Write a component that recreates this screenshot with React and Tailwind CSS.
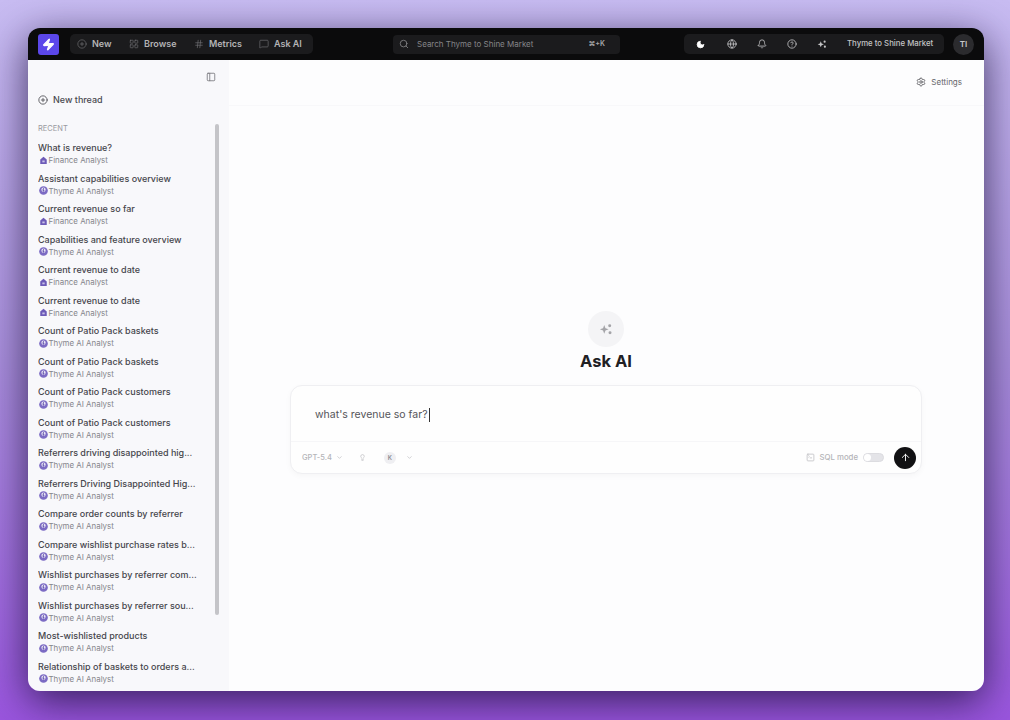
import { ArrowUp, Bell, ChevronDown, CircleHelp, CirclePlus, Globe, Hash, Lightbulb, Moon, PanelLeft, Search, Settings, LayoutGrid, MessageSquare, SquareTerminal, Zap } from 'lucide-react'

const threads = [
  ['What is revenue?', 'finance'],
  ['Assistant capabilities overview', 'thyme'],
  ['Current revenue so far', 'finance'],
  ['Capabilities and feature overview', 'thyme'],
  ['Current revenue to date', 'finance'],
  ['Current revenue to date', 'finance'],
  ['Count of Patio Pack baskets', 'thyme'],
  ['Count of Patio Pack baskets', 'thyme'],
  ['Count of Patio Pack customers', 'thyme'],
  ['Count of Patio Pack customers', 'thyme'],
  ['Referrers driving disappointed hig...', 'thyme'],
  ['Referrers Driving Disappointed Hig...', 'thyme'],
  ['Compare order counts by referrer', 'thyme'],
  ['Compare wishlist purchase rates b...', 'thyme'],
  ['Wishlist purchases by referrer com...', 'thyme'],
  ['Wishlist purchases by referrer sou...', 'thyme'],
  ['Most-wishlisted products', 'thyme'],
  ['Relationship of baskets to orders a...', 'thyme'],
]

const navItems = [
  { label: 'New', icon: CirclePlus, w: 'w-[52px]' },
  { label: 'Browse', icon: LayoutGrid, w: 'w-[65px]' },
  { label: 'Metrics', icon: Hash, w: 'w-[65px]' },
  { label: 'Ask AI', icon: MessageSquare, w: 'w-[50px]' },
]

// big four point star with two small dots, used on the AI button and the empty state
function Spark({ className }) {
  return (
    <svg viewBox="0 0 16 16" fill="currentColor" className={className}>
      <path d="M6 3.5 7.4 7 11 8.4 7.4 9.8 6 13.3 4.6 9.8 1 8.4 4.6 7z" />
      <circle cx="12.2" cy="4.2" r="1.7" />
      <circle cx="12.6" cy="12.2" r="1.7" />
    </svg>
  )
}

function AnalystIcon({ kind }) {
  if (kind === 'finance') {
    return (
      <svg viewBox="0 0 10 10" className="h-[9px] w-[9px] shrink-0">
        <path d="M5 .8 8.6 4v5H1.4V4z" fill="#6d5bb8" />
        <rect x="3.7" y="5" width="2.6" height="2" fill="#c9c2e8" />
      </svg>
    )
  }
  return (
    <svg viewBox="0 0 10 10" className="h-[9px] w-[9px] shrink-0">
      <circle cx="5" cy="5" r="4.8" fill="#7c6bc4" />
      <circle cx="5" cy="4.2" r="2.4" fill="#e8e5f5" />
      <path d="M4.6 2.4h1.2L5 4.4h1.2L4.4 7.6 4.8 5H3.7z" fill="#5b4aa8" />
    </svg>
  )
}

function TopBar() {
  return (
    <header className="flex h-[32px] shrink-0 items-center bg-[#0b0b0c] pl-[10px] pr-[10px]">
      <div className="flex h-[21px] w-[21px] items-center justify-center rounded-[3px] bg-[#5b47ea]">
        <Zap size={13} className="fill-white text-white" />
      </div>
      <nav className="ml-[11px] flex h-[20px] w-[243px] items-center rounded-[5px] bg-[#1b1b1d] pl-[7px] text-[9px] font-semibold text-[#b4b4b6]">
        {navItems.map(({ label, icon: Icon, w }) => (
          <div key={label} className={`flex items-center gap-[5px] ${w}`}>
            <Icon size={10} strokeWidth={1.5} className="shrink-0 text-[#77777a]" />
            <span>{label}</span>
          </div>
        ))}
      </nav>
      <div className="ml-[80px] flex h-[19px] w-[227px] items-center rounded-[4px] bg-[#1b1b1d] pl-[6px] pr-[15px] text-[#858588]">
        <Search size={10} className="shrink-0" />
        <span className="ml-[8px] text-[8px]">Search Thyme to Shine Market</span>
        <span className="ml-auto text-[7px] font-semibold text-[#a5a5a8]">⌘+K</span>
      </div>
      <div className="ml-[64px] flex h-[20px] w-[260px] items-center rounded-[5px] bg-[#1b1b1d] pl-[12px] text-[#c4c4c6]">
        <div className="flex w-[31px]"><Moon size={9} className="fill-white text-white" /></div>
        <div className="flex w-[30px]"><Globe size={10} /></div>
        <div className="flex w-[30px]"><Bell size={10} /></div>
        <div className="flex w-[30px]"><CircleHelp size={10} /></div>
        <div className="flex w-[30px]"><Spark className="h-[10px] w-[10px]" /></div>
        <span className="text-[7.8px] font-medium">Thyme to Shine Market</span>
      </div>
      <div className="ml-[9px] flex h-[21px] w-[21px] items-center justify-center rounded-full bg-[#2b2b2e] text-[8px] font-semibold text-[#c8c8ca]">
        TI
      </div>
    </header>
  )
}

function Sidebar() {
  return (
    <aside className="relative w-[201px] shrink-0 overflow-hidden bg-[#f8f8fb] pl-[10px]">
      <div className="flex h-[22px] items-end justify-end pr-[13px]">
        <PanelLeft size={10} className="text-[#77777c]" />
      </div>
      <div className="mt-[11px] flex h-[14px] items-center gap-[5px] text-[9px] font-medium text-[#4a4a50]">
        <CirclePlus size={10} className="text-[#4a4a50]" />
        New thread
      </div>
      <div className="mt-[16px] text-[7.5px] leading-[12px] text-[#9a9aa0]">RECENT</div>
      <ul className="mt-[6px]">
        {threads.map(([title, kind], i) => (
          <li key={i} className="h-[30.53px]">
            <div className="truncate text-[9px] font-medium leading-[13px] text-[#46464c]">{title}</div>
            <div className="flex items-center gap-[1px] pl-[0.5px] text-[7.9px] leading-[12px] text-[#85858b]">
              <AnalystIcon kind={kind} />
              {kind === 'finance' ? 'Finance Analyst' : 'Thyme AI Analyst'}
            </div>
          </li>
        ))}
      </ul>
      {/* scrollbar thumb */}
      <div className="absolute right-[10px] top-[64px] h-[491px] w-[4px] rounded-full bg-[#c4c4c8]" />
    </aside>
  )
}

function Composer() {
  return (
    <div className="flex h-[89px] w-[632px] flex-col rounded-[12px] border border-[#efeff2] bg-[#fefefe] shadow-[0_2px_6px_rgba(0,0,0,0.03)]">
      <div className="flex h-[56px] items-start border-b border-[#f6f6f8] pl-[24px] pt-[22px] text-[10.5px] leading-[14px] text-[#55555a]">
        what's revenue so far?
        <span className="ml-[1px] h-[14px] w-px bg-[#333]" />
      </div>
      <div className="flex flex-1 items-center pl-[11px] pr-[5px] text-[#b4b4b8]">
        <span className="text-[7.5px] font-medium">GPT-5.4</span>
        <ChevronDown size={7} className="ml-[4px]" />
        <Lightbulb size={7} className="ml-[16px]" />
        <span className="ml-[18px] flex h-[12px] w-[12px] items-center justify-center rounded-full bg-[#efeff2] text-[6px] font-semibold text-[#8d8d93]">K</span>
        <ChevronDown size={7} className="ml-[10px]" />
        <SquareTerminal size={9} className="ml-auto text-[#bcbcc0]" />
        <span className="ml-[4px] text-[7.8px] font-medium">SQL mode</span>
        <span className="ml-[5px] h-[9px] w-[21px] rounded-full border border-[#dcdce0] bg-[#e4e4e8]">
          <span className="block h-[7px] w-[7px] rounded-full bg-white" />
        </span>
        <span className="ml-[10px] flex h-[22px] w-[22px] items-center justify-center rounded-full bg-[#111113]">
          <ArrowUp size={11} className="text-white" />
        </span>
      </div>
    </div>
  )
}

function Main() {
  return (
    <main className="flex min-w-0 flex-1 flex-col bg-[#fdfdfe]">
      <div className="flex h-[46px] shrink-0 items-center justify-end border-b border-[#f8f8fa] pb-[2px] pr-[22px] text-[8px] text-[#66666b]">
        <Settings size={10} className="mr-[5px] text-[#55555a]" />
        Settings
      </div>
      <div className="flex flex-col items-center pt-[205px] pr-[1px]">
        <div className="flex h-[36px] w-[36px] items-center justify-center rounded-full bg-[#f4f4f6]">
          <Spark className="h-[14px] w-[14px] text-[#a4a4a8]" />
        </div>
        <h1 className="mt-[2px] text-[16.5px] font-bold leading-[24px] text-[#202023]">Ask AI</h1>
        <div className="mt-[12px]">
          <Composer />
        </div>
      </div>
    </main>
  )
}

export default function App() {
  return (
    <div
      className="h-[720px] w-[1010px] overflow-hidden bg-gradient-to-b from-[#c8bcf2] via-[#a98fdc] to-[#9a55de] pl-[28px] pt-[28px]"
      style={{ fontFamily: 'Inter, "Noto Sans", sans-serif' }}
    >
      <div className="flex h-[663px] w-[956px] flex-col overflow-hidden rounded-[12px] shadow-[0_10px_40px_rgba(20,10,50,0.75)]">
        <TopBar />
        <div className="flex min-h-0 flex-1">
          <Sidebar />
          <Main />
        </div>
      </div>
    </div>
  )
}
